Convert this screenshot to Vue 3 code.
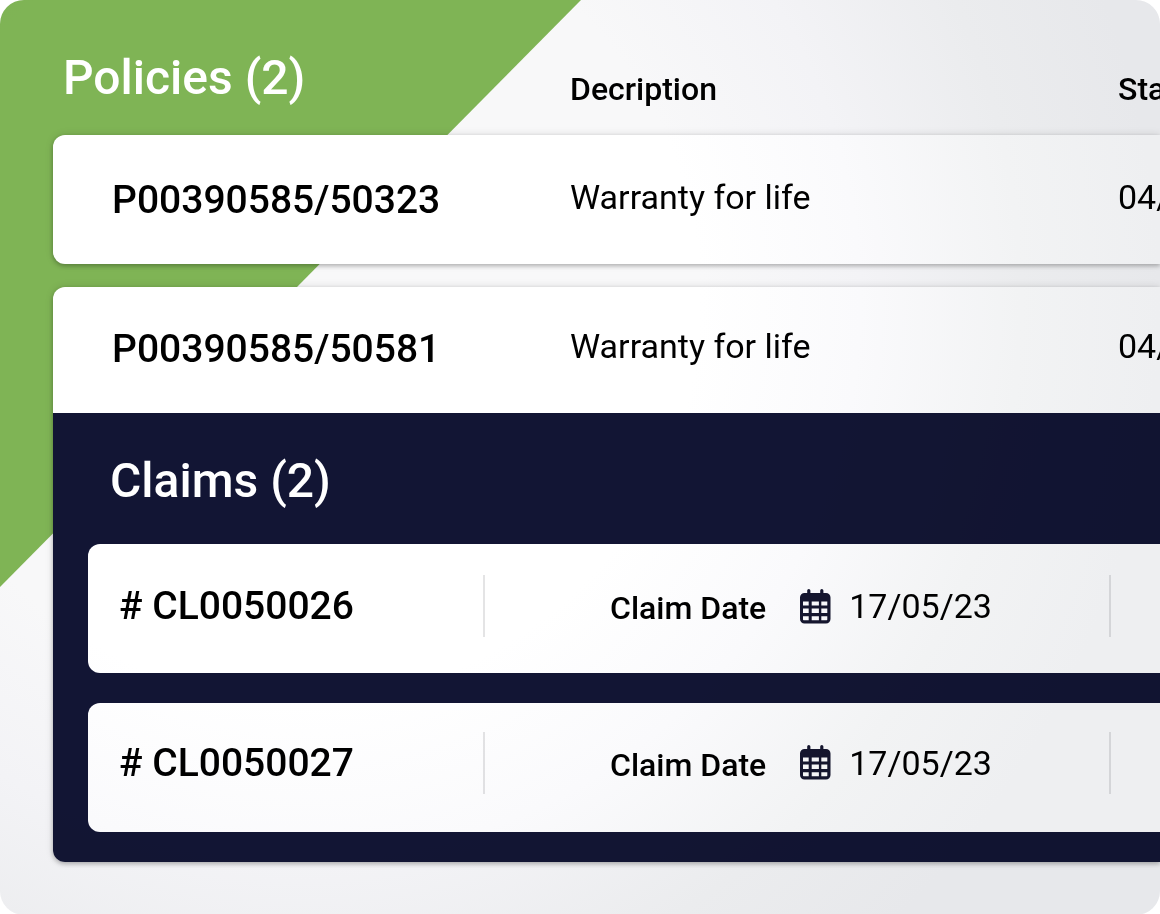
<script setup>
const policies = [
  { id: 'P00390585/50323', description: 'Warranty for life', start: '04/05', claims: [] },
  {
    id: 'P00390585/50581',
    description: 'Warranty for life',
    start: '04/05',
    claims: [
      { id: 'CL0050026', date: '17/05/23' },
      { id: 'CL0050027', date: '17/05/23' },
    ],
  },
]
</script>

<template>
  <main class="panel">
    <table class="policies">
      <thead>
        <tr class="row head">
          <th class="title" scope="col">Policies ({{ policies.length }})</th>
          <th scope="col">Decription</th>
          <th scope="col">Start</th>
        </tr>
      </thead>
      <tbody v-for="policy in policies" :key="policy.id" class="policy">
        <tr class="row" :class="{ open: policy.claims.length }">
          <th class="policy-id" scope="row">{{ policy.id }}</th>
          <td class="value">{{ policy.description }}</td>
          <td class="value">{{ policy.start }}</td>
        </tr>
        <tr v-if="policy.claims.length" class="claims-row">
          <td class="claims" colspan="3">
            <h2 class="claims-title">Claims ({{ policy.claims.length }})</h2>
            <ul class="claim-list">
              <li v-for="claim in policy.claims" :key="claim.id" class="claim">
                <span class="claim-id"># {{ claim.id }}</span>
                <span class="divider"></span>
                <div class="claim-date">
                  <span class="label">Claim Date</span>
                  <svg class="calendar" viewBox="0 0 31 35" aria-hidden="true">
                    <path
                      fill="currentColor"
                      fill-rule="evenodd"
                      d="M7.2 1.6a1.6 1.6 0 0 1 3.2 0V4h9.800V1.600a1.600 1.600 0 0 1 3.200 0V4H26a4.500 4.500 0 0 1 4.500 4.500V30a4.500 4.500 0 0 1-4.500 4.500H4.500A4.500 4.500 0 0 1 0 30V8.500A4.500 4.500 0 0 1 4.500 4h2.700zM3 12.500v4h5.700v-4zM11.700 12.500v4h7.200v-4zM21.300 12.500v4h6v-4zM3 19.500v4.600h5.700v-4.600zM11.700 19.500v4.600h7.200v-4.600zM21.300 19.500v4.600h6v-4.600zM3 27.200v3.300a.7.7 0 0 0 .7.7h5v-4zM11.700 27.200v4h7.200v-4zM21.300 27.200v4h5.300a.7.7 0 0 0 .7-.7v-3.300z"
                    />
                  </svg>
                  <time>{{ claim.date }}</time>
                </div>
                <span class="divider"></span>
              </li>
            </ul>
          </td>
        </tr>
      </tbody>
    </table>
  </main>
</template>

<style>
body {
  background: #fff;
}
</style>

<style scoped>
.panel {
  position: relative;
  box-sizing: border-box;
  min-height: 100vh;
  padding: 0 0 53px 53px;
  overflow: hidden;
  border-radius: 24px;
  background: #f8f8f9;
  color: #000;
  font-family: Roboto, "Liberation Sans", sans-serif;
  isolation: isolate;
}

/* Green corner behind the cards */
.panel::before {
  content: "";
  position: absolute;
  z-index: -1;
  top: 0;
  left: 0;
  width: 581px;
  height: 587px;
  background: #7fb455;
  clip-path: polygon(0 0, 100% 0, 0 100%);
}

/* Soft shading toward the outer edges */
.panel::after {
  content: "";
  position: absolute;
  inset: 0;
  pointer-events: none;
  mix-blend-mode: multiply;
  background: radial-gradient(
    circle at 300px 300px,
    #fff 400px,
    #fafafc 560px,
    #f2f3f4 720px,
    #eeeff1 860px
  );
}

.policies,
.policies thead {
  display: block;
}

.row {
  display: grid;
  grid-template-columns: minmax(0, 458fr) minmax(0, 548fr) 42px;
  align-items: center;
  box-sizing: border-box;
  height: 129px;
  padding-left: 59px;
  white-space: nowrap;
}

.row th,
.row td {
  padding: 0;
  text-align: left;
}

.head {
  height: 135px;
  font-size: 32px;
  line-height: 40px;
}

.row.head th {
  padding-top: 42px;
  font-weight: 500;
}

.row.head .title {
  margin-left: -49px;
  padding-top: 20px;
  color: #fff;
  font-size: 48px;
  line-height: 56px;
}

.policy {
  display: block;
  border-radius: 12px 0 0 12px;
  background: #fff;
  box-shadow: 0 2px 4px rgba(0, 0, 0, 0.24), 0 0 8px rgba(0, 0, 0, 0.12);
}

.policy + .policy {
  margin-top: 23px;
}

.open {
  height: 126px;
  padding-bottom: 3px;
}

.policy-id,
.claim-id {
  font-size: 39px;
  font-weight: 500;
  line-height: 46px;
}

.value {
  font-size: 34px;
  line-height: 40px;
}

.row .value {
  padding-bottom: 6px;
}

.claims-row,
.claims {
  display: block;
}

.claims {
  padding: 40px 0 30px 35px;
  border-radius: 0 0 0 12px;
  background: #121534;
}

.claims-title {
  margin: 0 0 35px 22px;
  color: #fff;
  font-size: 48px;
  font-weight: 500;
  line-height: 56px;
}

.claim-list {
  display: grid;
  gap: 30px;
  margin: 0;
  padding: 0;
  list-style: none;
}

.claim {
  display: grid;
  grid-template-columns: minmax(0, 364fr) 2px minmax(0, 624fr) 2px 49px;
  align-items: center;
  box-sizing: border-box;
  height: 129px;
  padding: 0 0 5px 31px;
  border-radius: 12px 0 0 12px;
  background: #fff;
  white-space: nowrap;
}

.claim + .claim {
  padding-bottom: 10px;
}

.divider {
  height: 62px;
  background: #e4e4e5;
}

.claim-date {
  display: flex;
  align-items: center;
  padding-left: 125px;
  font-size: 34px;
  line-height: 40px;
}

.label {
  padding-top: 4px;
  font-size: 32px;
  font-weight: 500;
}

.calendar {
  flex: none;
  width: 31px;
  height: 35px;
  margin: 0 18px 0 34px;
  color: #15162f;
}
</style>
